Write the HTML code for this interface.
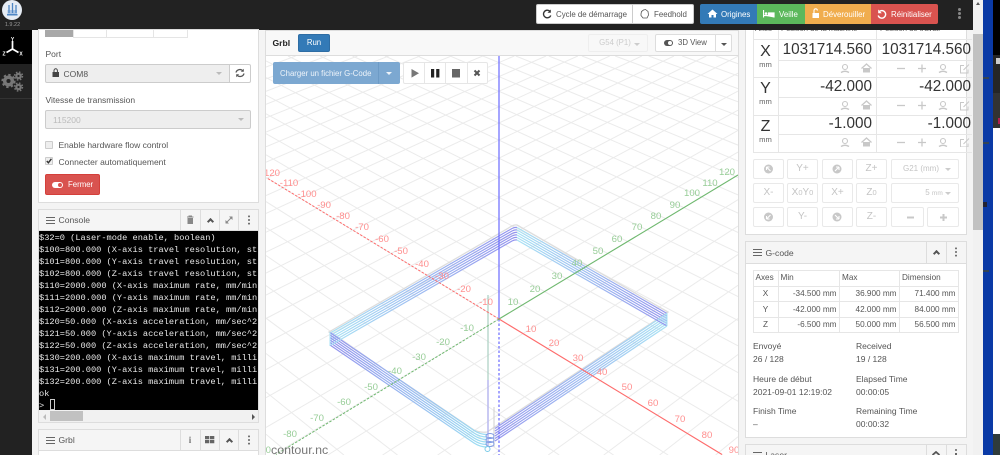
<!DOCTYPE html>
<html><head><meta charset="utf-8"><style>
html,body{margin:0;padding:0;width:1000px;height:455px;overflow:hidden;background:#f4f4f4}
body{font-family:"Liberation Sans",sans-serif;font-size:8.5px;color:#555;position:relative}
#w{position:absolute;left:0;top:0;width:1000px;height:455px;overflow:hidden;filter:blur(.35px)}
.a{position:absolute;box-sizing:border-box;white-space:nowrap}
.t{position:absolute;white-space:nowrap;line-height:12px;margin-top:-6px}
.c{text-align:center}
.r{text-align:right}
.b{position:absolute;box-sizing:border-box;border:1px solid #e9e9e9;border-radius:2px;background:#fff;color:#c4c4c4;text-align:center}
.hd{position:absolute;box-sizing:border-box;background:#f5f5f5;border-bottom:1px solid #ddd}
.div{position:absolute;width:1px;background:#ddd}
.dots{position:absolute;width:2.4px;height:2.4px;border-radius:50%;background:currentColor;box-shadow:0 3.6px 0 currentColor,0 -3.6px 0 currentColor}
.bar{position:absolute;width:9px;height:7px;border-top:1.2px solid #666;border-bottom:1.2px solid #666;box-sizing:border-box}
.bar:after{content:"";position:absolute;left:0;right:0;top:1.7px;height:1.2px;background:#666}
.chev{position:absolute;width:5px;height:5px;border-left:2px solid #555;border-top:2px solid #555;transform:rotate(45deg);box-sizing:border-box}
.car{position:absolute;width:0;height:0;border-left:3px solid transparent;border-right:3px solid transparent;border-top:3px solid #bbb}
.hl{position:absolute;height:1px;background:#e6e6e6}
.vl{position:absolute;width:1px;background:#e6e6e6}
.val{position:absolute;font-size:15.3px;line-height:18px;color:#333;text-align:right;white-space:nowrap}
.ax{position:absolute;left:753px;width:25px;text-align:center;font-size:16px;color:#333;line-height:18px}
.mm{position:absolute;left:753px;width:25px;text-align:center;font-size:7.6px;color:#666;line-height:10px}
.m{position:absolute;left:39px;font:8.67px/12px "Liberation Mono",monospace;color:#e8e8e8;white-space:pre;width:219px;overflow:hidden}
</style></head><body><div id="w">

<!-- backgrounds -->
<div class="a" style="left:0;top:0;width:1000px;height:30px;background:#222"></div>
<div class="a" style="left:0;top:0;width:32px;height:455px;background:#222"></div>
<div class="a" style="left:0;top:30px;width:32px;height:34px;background:#000"></div>
<div class="a" style="left:0;top:98px;width:32px;height:1px;background:#333"></div>

<!-- logo -->
<div class="a" style="left:2px;top:0;width:20px;height:20px;border-radius:50%;background:#e6ecf4"></div>
<svg class="a" style="left:2px;top:0" width="20" height="20"><rect x="5.500" y="10" width="9.500" height="5" fill="#a9c4e4"/><path d="M7 5v8M10.500 3v10M14 5v8" stroke="#4f86c4" stroke-width="1.300"/><rect x="5" y="14" width="10.500" height="1.500" fill="#4f86c4"/></svg>
<div class="t c" style="left:0;top:25px;width:25px;font-size:5.5px;color:#999">1.9.22</div>
<!-- axes icon -->
<svg class="a" style="left:0;top:30px" width="32" height="34"><path d="M12.500 11V19M12.500 19L6.500 22.500M12.500 19L18.500 22.500" stroke="#fff" stroke-width="1.700" fill="none"/><text x="12.500" y="11" font-size="5" font-weight="bold" fill="#fff" text-anchor="middle" font-family="Liberation Sans">Y</text><text x="4" y="25.500" font-size="5" font-weight="bold" fill="#fff" text-anchor="middle" font-family="Liberation Sans">Z</text><text x="21" y="25.500" font-size="5" font-weight="bold" fill="#fff" text-anchor="middle" font-family="Liberation Sans">X</text></svg>
<!-- gears -->
<svg class="a" style="left:0;top:66px" width="32" height="30"><g fill="none" stroke="#777"><circle cx="8.500" cy="15" r="3.800" stroke-width="3.500"/><circle cx="8.500" cy="15" r="6.200" stroke-width="1.800" stroke-dasharray="2.400 2.400"/><circle cx="18.500" cy="10" r="2.200" stroke-width="2.200"/><circle cx="18.500" cy="10" r="4" stroke-width="1.400" stroke-dasharray="1.600 1.600"/><circle cx="18.500" cy="21" r="2.200" stroke-width="2.200"/><circle cx="18.500" cy="21" r="4" stroke-width="1.400" stroke-dasharray="1.600 1.600"/></g></svg>

<!-- left panel -->
<div class="a" style="left:38px;top:29px;width:221px;height:174px;background:#fff;border:1px solid #ddd"></div>
<div class="a" style="left:45px;top:30px;width:28px;height:7px;background:#a8a8a8"></div>
<div class="a" style="left:73px;top:30px;width:34px;height:8px;border:1px solid #e5e5e5;border-top:0"></div>
<div class="a" style="left:107px;top:30px;width:47px;height:8px;border:1px solid #e5e5e5;border-top:0;border-left:0"></div>
<div class="a" style="left:154px;top:30px;width:34px;height:8px;border:1px solid #e5e5e5;border-top:0;border-left:0"></div>
<div class="t" style="left:45.500px;top:54px">Port</div>
<div class="a" style="left:45px;top:64px;width:185px;height:19px;background:#eee;border:1px solid #ccc;border-radius:2px 0 0 2px"></div>
<div class="a" style="left:229px;top:64px;width:22px;height:19px;background:#fff;border:1px solid #ccc;border-radius:0 2px 2px 0"></div>
<svg class="a" style="left:51px;top:68px" width="10" height="10"><rect x="1.500" y="4" width="6.500" height="5" fill="#444"/><path d="M3 4V2.500a1.700 1.700 0 0 1 3.400 0V4" fill="none" stroke="#444"/></svg>
<div class="t" style="left:63.500px;top:73.500px">COM8</div>
<div class="car" style="left:216px;top:72px"></div>
<svg class="a" style="left:235px;top:68px" width="10" height="10"><path d="M1 4.500a4 4 0 0 1 7-1.500M9 5.500a4 4 0 0 1-7 1.500" fill="none" stroke="#555" stroke-width="1.300"/><path d="M8.800 .8v3h-3zM1.200 9.200v-3h3z" fill="#555"/></svg>
<div class="t" style="left:45.500px;top:99.500px">Vitesse de transmission</div>
<div class="a" style="left:45px;top:110px;width:206px;height:19px;background:#eee;border:1px solid #ccc;border-radius:2px"></div>
<div class="t" style="left:53px;top:119.500px;color:#bbb">115200</div>
<div class="car" style="left:238px;top:118px"></div>
<div class="a" style="left:45px;top:141px;width:8px;height:8px;background:#eee;border:1px solid #ccc;border-radius:1px"></div>
<div class="t" style="left:58.500px;top:145px">Enable hardware flow control</div>
<div class="a" style="left:45px;top:157px;width:8px;height:8px;background:#eee;border:1px solid #ccc;border-radius:1px"></div>
<svg class="a" style="left:45px;top:157px" width="8" height="8"><path d="M1.800 4L3.400 5.800L6.400 1.800" fill="none" stroke="#333" stroke-width="1.400"/></svg>
<div class="t" style="left:58.500px;top:161.500px">Connecter automatiquement</div>
<div class="a" style="left:45px;top:174px;width:55px;height:21px;background:#d9534f;border:1px solid #d43f3a;border-radius:2px"></div>
<div class="a" style="left:52px;top:181.500px;width:11px;height:6.500px;border-radius:4px;background:#fff"></div>
<div class="a" style="left:57.500px;top:182.500px;width:4.500px;height:4.500px;border-radius:50%;background:#d9534f"></div>
<div class="t" style="left:68px;top:185px;color:#fff;font-size:7.8px">Fermer</div>

<!-- console panel -->
<div class="a" style="left:38px;top:209px;width:221px;height:214px;background:#fff;border:1px solid #ddd"></div>
<div class="hd" style="left:39px;top:210px;width:219px;height:21px"></div>
<div class="bar" style="left:45.500px;top:217px"></div>
<div class="t" style="left:58.500px;top:220px;font-size:8.600px">Console</div>
<div class="div" style="left:180px;top:210px;height:21px"></div><div class="div" style="left:200px;top:210px;height:21px"></div><div class="div" style="left:219px;top:210px;height:21px"></div><div class="div" style="left:238px;top:210px;height:21px"></div>
<svg class="a" style="left:186px;top:215px" width="9" height="10"><path d="M1 2h6.500M3 2V1h2.500v1" stroke="#888" fill="none"/><rect x="1.500" y="3" width="5.500" height="6" fill="#888"/></svg>
<div class="chev" style="left:207.500px;top:218.500px"></div>
<svg class="a" style="left:224px;top:215px" width="10" height="10"><path d="M2 8L8 2" stroke="#888"/><path d="M5 1.500h3.500V5zM1.500 5v3.500H5z" fill="#888"/></svg>
<div class="dots" style="left:247.500px;top:218.500px;color:#666"></div>
<div class="a" style="left:39px;top:231px;width:219px;height:179px;background:#000"></div>
<div class="m" style="top:232px">$32=0 (Laser-mode enable, boolean)
$100=800.000 (X-axis travel resolution, st
$101=800.000 (Y-axis travel resolution, st
$102=800.000 (Z-axis travel resolution, st
$110=2000.000 (X-axis maximum rate, mm/min
$111=2000.000 (Y-axis maximum rate, mm/min
$112=2000.000 (Z-axis maximum rate, mm/min
$120=50.000 (X-axis acceleration, mm/sec^2
$121=50.000 (Y-axis acceleration, mm/sec^2
$122=50.000 (Z-axis acceleration, mm/sec^2
$130=200.000 (X-axis maximum travel, milli
$131=200.000 (Y-axis maximum travel, milli
$132=200.000 (Z-axis maximum travel, milli
ok
&gt;</div>
<div class="a" style="left:49.500px;top:399px;width:5.500px;height:11px;border:1px solid #ccc"></div>
<div class="a" style="left:39px;top:410px;width:219px;height:12px;background:#f1f1f1"></div>
<div class="a" style="left:50px;top:411px;width:33px;height:10px;background:#c1c1c1"></div>
<div class="a" style="left:43px;top:414px;width:0;height:0;border:3px solid transparent;border-left:0;border-right:3px solid #bbb"></div>
<div class="a" style="left:252px;top:414px;width:0;height:0;border:3px solid transparent;border-right:0;border-left:3px solid #555"></div>

<!-- Grbl panel -->
<div class="a" style="left:38px;top:429px;width:221px;height:26px;background:#fff;border:1px solid #ddd;border-bottom:0"></div>
<div class="hd" style="left:39px;top:430px;width:219px;height:21px"></div>
<div class="bar" style="left:45.500px;top:437px"></div>
<div class="t" style="left:58.500px;top:440px;font-size:8.600px">Grbl</div>
<div class="div" style="left:180px;top:430px;height:21px"></div><div class="div" style="left:200px;top:430px;height:21px"></div><div class="div" style="left:219px;top:430px;height:21px"></div><div class="div" style="left:238px;top:430px;height:21px"></div>
<div class="t c" style="left:180px;top:439.500px;width:20px;font:bold 9px/12px 'Liberation Serif',serif;color:#777">i</div>
<svg class="a" style="left:205px;top:436px" width="10" height="8"><path d="M0 0h4.300v3.300H0zM5 0h4.300v3.300H5zM0 4h4.300v3.300H0zM5 4h4.300v3.300H5z" fill="#666"/></svg>
<div class="chev" style="left:227px;top:438.500px"></div>
<div class="dots" style="left:247.500px;top:438.500px;color:#666"></div>

<!-- center widget -->
<div class="a" style="left:265px;top:30px;width:474px;height:425px;background:#fff;border:1px solid #ddd;border-bottom:0"></div>
<div class="a" style="left:266px;top:31px;width:472px;height:25px;background:#f8f8f8;border-bottom:1px solid #ddd"></div>
<svg id="g" class="a" style="left:266px;top:56px" width="472" height="399" viewBox="266 56 472 399" font-family="Liberation Sans" font-size="9.600" text-anchor="middle">
<defs>
<linearGradient id="g1" gradientUnits="userSpaceOnUse" x1="516" y1="240" x2="667" y2="325"><stop offset="0" stop-color="#a8e2f4"/><stop offset="1" stop-color="#9494ee"/></linearGradient>
<linearGradient id="g2" gradientUnits="userSpaceOnUse" x1="667" y1="325" x2="490" y2="445"><stop offset="0" stop-color="#a8e2f4"/><stop offset="1" stop-color="#9494ee"/></linearGradient>
<linearGradient id="g3" gradientUnits="userSpaceOnUse" x1="480" y1="447" x2="330" y2="347"><stop offset="0" stop-color="#9cdcf2"/><stop offset="1" stop-color="#9494ee"/></linearGradient>
<linearGradient id="g4" gradientUnits="userSpaceOnUse" x1="330" y1="345" x2="513" y2="240"><stop offset="0" stop-color="#a8e2f4"/><stop offset="1" stop-color="#9494ee"/></linearGradient>
<g id="lay" fill="none" stroke-width="1.200">
<path d="M517 240Q515 239.500 512 241L331 345" stroke="url(#g4)"/>
<path d="M517 240L667 326" stroke="url(#g1)"/>
<path d="M667 326L495 441" stroke="url(#g2)"/>
<path d="M330 345L474 443Q480 447 487 447" stroke="url(#g3)"/>
</g>
</defs>
<g id="grid" stroke="#ebebeb" stroke-width="1" fill="none"></g>
<g stroke="#ddd" fill="none" stroke-width="1.300"><path d="M517 225Q515 224.500 512 226L329 332L474 430Q480 433 487 432L668 312L517 225"/></g>
<use href="#lay" y="-2.500"/><use href="#lay" y="-5"/><use href="#lay" y="-7.500"/><use href="#lay" y="-10"/><use href="#lay" y="-12.500"/><use href="#lay"/>
<path d="M330 332V346M667 313V326" stroke="#a8e2f4" fill="none"/>
<path d="M488 295V380" stroke="#a9cfc0" stroke-width="1.200"/>
<path d="M488 380V447" stroke="#b4b4ee" stroke-width="1.400"/>
<path d="M494 407V447" stroke="#cfcfcf" stroke-width="1"/>
<g fill="none" stroke="#7f9be4"><ellipse cx="490" cy="436" rx="4" ry="2.500"/><ellipse cx="490" cy="440" rx="4" ry="2.500"/><ellipse cx="490" cy="444" rx="4" ry="2.500"/><ellipse cx="487.500" cy="449" rx="2.500" ry="2.500" stroke="#7ccbe8"/></g>
<!-- axes -->
<path d="M499 56V319" stroke="#6a6aff" stroke-width="1.200"/>
<path d="M499 319V455" stroke="#6a6aff" stroke-width="1.200" stroke-dasharray="2.500 2"/>
<path d="M499 319L722 454.500" stroke="#ff6b6b" stroke-width="1.100"/>
<path d="M499 319L267 178" stroke="#ff6b6b" stroke-width="1" stroke-dasharray="2.500 1.500"/>
<path d="M499 319L738 175" stroke="#6fb96f" stroke-width="1.100"/>
<path d="M499 319L276 454.500" stroke="#6fb96f" stroke-width="1" stroke-dasharray="2.500 1.500"/>
<g fill="#ff8f8f">
<text x="531" y="332">10</text><text x="554" y="346">20</text><text x="578" y="361">30</text><text x="602" y="375">40</text><text x="627" y="390">50</text><text x="653" y="406">60</text><text x="680" y="422">70</text><text x="707" y="438">80</text><text x="734" y="453">90</text>
<text x="486" y="305">-10</text><text x="464" y="292">-20</text><text x="442" y="279">-30</text><text x="422" y="267">-40</text><text x="401" y="254">-50</text><text x="382" y="242">-60</text><text x="362" y="230">-70</text><text x="343" y="219">-80</text><text x="324" y="208">-90</text><text x="307" y="197">-100</text><text x="289" y="186">-110</text><text x="272" y="176">120</text>
</g>
<g fill="#97cd97">
<text x="513" y="305">10</text><text x="535" y="292">20</text><text x="557" y="279">30</text><text x="577" y="266">40</text><text x="598" y="254">50</text><text x="617" y="242">60</text><text x="637" y="230">70</text><text x="656" y="219">80</text><text x="675" y="208">90</text><text x="692" y="196">100</text><text x="710" y="186">110</text><text x="727" y="175">120</text>
<text x="467" y="331">-10</text><text x="443" y="345">-20</text><text x="419" y="360">-30</text><text x="395" y="374">-40</text><text x="371" y="390">-50</text><text x="344" y="405">-60</text><text x="317" y="421">-70</text><text x="290" y="437">-80</text><text x="264" y="453">-90</text>
</g>
</svg>
<div class="a" style="left:271px;top:445px;height:10px;line-height:10px;font-size:12.400px;color:#777;overflow:hidden">contour.nc</div>

<!-- center header -->
<div class="t" style="left:272.500px;top:43px;font-weight:bold;font-size:8.600px;color:#222">Grbl</div>
<div class="a c" style="left:298px;top:34px;width:32px;height:18px;background:#337ab7;border:1px solid #2e6da4;border-radius:2px;color:#fff;font-size:7.800px;line-height:16px">Run</div>
<div class="a c" style="left:588px;top:34px;width:60px;height:18px;border:1px solid #eee;border-radius:2px;color:#ccc;font-size:7.800px;line-height:16px;padding-right:6px">G54 (P1)</div>
<div class="car" style="left:634px;top:42.500px;border-top-color:#ccc"></div>
<div class="a" style="left:655px;top:34px;width:61px;height:18px;background:#fff;border:1px solid #ddd;border-radius:2px 0 0 2px"></div>
<div class="a" style="left:715px;top:34px;width:17px;height:18px;background:#fff;border:1px solid #ddd;border-radius:0 2px 2px 0"></div>
<div class="a" style="left:664px;top:40px;width:9px;height:6px;border-radius:3px;background:#555"></div>
<div class="a" style="left:668px;top:41px;width:4px;height:4px;border-radius:50%;background:#fff"></div>
<div class="t" style="left:678px;top:43px;font-size:7.800px">3D View</div>
<div class="car" style="left:720.500px;top:42.500px;border-top-color:#555"></div>

<!-- g-code toolbar -->
<div class="a" style="left:273px;top:62px;width:127px;height:22px;background:#7ca8d1;border-radius:2px"></div>
<div class="a" style="left:378px;top:62px;width:1px;height:22px;background:#6d9bc6"></div>
<div class="t" style="left:280px;top:73.500px;color:#eef4fa;font-size:7.800px">Charger un fichier G-Code</div>
<div class="car" style="left:386px;top:71.500px;border-top-color:#eef4fa"></div>
<div class="a" style="left:403px;top:62px;width:85px;height:22px;background:#fff;border:1px solid #e6e6e6;border-radius:2px"></div>
<div class="a" style="left:424px;top:62px;width:1px;height:22px;background:#e6e6e6"></div><div class="a" style="left:445px;top:62px;width:1px;height:22px;background:#e6e6e6"></div><div class="a" style="left:467px;top:62px;width:1px;height:22px;background:#e6e6e6"></div>
<svg class="a" style="left:403px;top:62px" width="85" height="22"><path d="M8.500 7L16 11.300L8.500 15.600z" fill="#777"/><path d="M28 7h3.200v8.500H28zM33.200 7h3.200v8.500H33.200z" fill="#222"/><rect x="49" y="7" width="8" height="8.500" fill="#666"/><path d="M71.500 8.500L76.500 13.500M76.500 8.500L71.500 13.500" stroke="#555" stroke-width="2"/></svg>

<!-- top bar buttons -->
<div class="a" style="left:536px;top:4px;width:157.500px;height:19.500px;background:#fff;border:1px solid #ccc;border-radius:2px"></div>
<div class="a" style="left:632px;top:4px;width:1px;height:19.500px;background:#ccc"></div>
<svg class="a" style="left:542px;top:9px" width="10" height="10"><path d="M8 2.300A3.800 3.800 0 1 0 8.800 6.500" fill="none" stroke="#333" stroke-width="1.400"/><path d="M8.800 .5V3.800H5.500z" fill="#333"/></svg>
<div class="t" style="left:556px;top:14.500px;font-size:7.900px">Cycle de démarrage</div>
<svg class="a" style="left:639px;top:8px" width="11" height="12"><path d="M2 6L2.500 3.500L4.500 2L6.500 1.500L9 3.500L9.500 7L8 10H4L2 7.500z" fill="none" stroke="#555" stroke-width=".800"/></svg>
<div class="t" style="left:654px;top:14.500px;font-size:7.900px">Feedhold</div>
<div class="a" style="left:700px;top:4px;width:57px;height:19.500px;background:#337ab7;border-radius:2px 0 0 2px"></div>
<div class="a" style="left:757px;top:4px;width:48px;height:19.500px;background:#5cb85c"></div>
<div class="a" style="left:805px;top:4px;width:66px;height:19.500px;background:#f0ad4e"></div>
<div class="a" style="left:871px;top:4px;width:67px;height:19.500px;background:#d9534f;border-radius:0 2px 2px 0"></div>
<svg class="a" style="left:707px;top:9px" width="11" height="9"><path d="M5.500 .5L10.500 5H9V8.500H6.500V6H4.500V8.500H2V5H.5z" fill="#fff"/></svg>
<div class="t" style="left:721px;top:14.500px;font-size:7.900px;color:#fff">Origines</div>
<svg class="a" style="left:763px;top:10px" width="12" height="8"><path d="M.5 0V7.500M.5 5.500H11V7.500M11 5.500V3H5.500V5.500" stroke="#fff" fill="#fff" stroke-width="1.200"/><circle cx="3" cy="3.500" r="1.300" fill="#fff"/></svg>
<div class="t" style="left:779px;top:14.500px;font-size:7.900px;color:#fff">Veille</div>
<svg class="a" style="left:811px;top:8px" width="10" height="11"><rect x="1.500" y="5" width="6.500" height="5" fill="#fff"/><path d="M3 5V2.500a1.700 1.700 0 0 1 3.400 0" fill="none" stroke="#fff" stroke-width="1.100"/></svg>
<div class="t" style="left:823px;top:14.500px;font-size:7.900px;color:#fff">Déverouiller</div>
<svg class="a" style="left:877px;top:9px" width="10" height="10"><path d="M2 2.800A3.800 3.800 0 1 1 1.200 6.500" fill="none" stroke="#fff" stroke-width="1.400"/><path d="M1.200 .5V4.200H4.800z" fill="#fff"/></svg>
<div class="t" style="left:891px;top:14.500px;font-size:7.900px;color:#fff">Réinitialiser</div>
<div class="dots" style="left:957.500px;top:11.500px;color:#888;width:3px;height:3px;box-shadow:0 4px 0 #888,0 -4px 0 #888"></div>

<!-- right column: DRO panel -->
<div class="a" style="left:745px;top:30px;width:222px;height:205px;background:#fff;border:1px solid #ddd;border-top:0"></div>
<div class="a" style="left:745px;top:30px;width:228px;height:9px;overflow:hidden">
<div class="t" style="left:10px;top:-1px;font-size:7.600px;color:#666">Axes</div>
<div class="t" style="left:36px;top:-1px;font-size:7.600px;color:#666">Position de la machine</div>
<div class="t" style="left:135px;top:-1px;font-size:7.600px;color:#666">Position de travail</div>
</div>
<div class="hl" style="left:753px;top:39px;width:219px"></div>
<div class="hl" style="left:778px;top:60px;width:194px"></div>
<div class="hl" style="left:753px;top:77px;width:219px"></div>
<div class="hl" style="left:778px;top:97px;width:194px"></div>
<div class="hl" style="left:753px;top:115px;width:219px"></div>
<div class="hl" style="left:778px;top:134px;width:194px"></div>
<div class="hl" style="left:753px;top:152px;width:219px"></div>
<div class="vl" style="left:753px;top:30px;height:122px"></div>
<div class="vl" style="left:778px;top:30px;height:122px"></div>
<div class="vl" style="left:876px;top:30px;height:122px"></div>

<div class="ax" style="top:43px">X</div><div class="mm" style="top:60px">mm</div>
<div class="ax" style="top:80px">Y</div><div class="mm" style="top:97px">mm</div>
<div class="ax" style="top:118px">Z</div><div class="mm" style="top:135px">mm</div>
<div class="val" style="left:772px;width:100px;top:41px">1031714.560</div>
<div class="val" style="left:870px;width:101px;top:41px">1031714.560</div>
<div class="val" style="left:772px;width:100px;top:78px">-42.000</div>
<div class="val" style="left:870px;width:101px;top:78px">-42.000</div>
<div class="val" style="left:772px;width:100px;top:115px">-1.000</div>
<div class="val" style="left:870px;width:101px;top:115px">-1.000</div>

<svg class="a" style="left:835px;top:62px" width="135" height="85" fill="none" stroke="#c8c8c8">
<defs><g id="ro"><circle cx="10" cy="5" r="2.500" stroke-width="1.100"/><path d="M6 10.500Q10 8 14 10.500" stroke-width="1.500"/><path d="M28 6h7v4.500h-7z" fill="#c8c8c8" stroke="none"/><path d="M26.500 6.500L31.500 2L36.500 6.500" stroke-width="1.300"/><path d="M62 6.500h8" stroke-width="1.300"/><path d="M83 6.500h8M87 2.500v8" stroke-width="1.300"/><circle cx="108" cy="5" r="2.500" stroke-width="1.100"/><path d="M104 10.500Q108 8 112 10.500" stroke-width="1.500"/><path d="M129 3.500h-3.500v7.500h7.500v-3.500M128.500 8L134 2.500" stroke-width="1"/></g></defs>
<use href="#ro"/><use href="#ro" y="37"/><use href="#ro" y="74"/>
</svg>

<!-- jog -->
<div class="b" style="left:753px;top:159px;width:31px;height:20px"></div>
<div class="b" style="left:787px;top:159px;width:31px;height:20px;font-size:10px;line-height:18px">Y+</div>
<div class="b" style="left:822px;top:159px;width:31px;height:20px"></div>
<div class="b" style="left:856px;top:159px;width:31px;height:20px;font-size:10px;line-height:18px">Z+</div>
<div class="b" style="left:891px;top:159px;width:68px;height:20px;font-size:8px;line-height:18px;padding-right:8px">G21 (mm)</div>
<div class="b" style="left:753px;top:183px;width:31px;height:20px;font-size:10px;line-height:18px">X-</div>
<div class="b" style="left:787px;top:183px;width:31px;height:20px;font-size:10px;line-height:18px">X<span style="font-size:7.500px">0</span>Y<span style="font-size:7.500px">0</span></div>
<div class="b" style="left:822px;top:183px;width:31px;height:20px;font-size:10px;line-height:18px">X+</div>
<div class="b" style="left:856px;top:183px;width:31px;height:20px;font-size:10px;line-height:18px">Z<span style="font-size:7.500px">0</span></div>
<div class="b" style="left:891px;top:183px;width:68px;height:20px;font-size:8px;line-height:18px;padding-left:18px">5 <span style="font-size:6.500px">mm</span></div>
<div class="b" style="left:753px;top:207px;width:31px;height:20px"></div>
<div class="b" style="left:787px;top:207px;width:31px;height:20px;font-size:10px;line-height:18px">Y-</div>
<div class="b" style="left:822px;top:207px;width:31px;height:20px"></div>
<div class="b" style="left:856px;top:207px;width:31px;height:20px;font-size:10px;line-height:18px">Z-</div>
<div class="b" style="left:891px;top:207px;width:33px;height:20px"></div>
<div class="b" style="left:927px;top:207px;width:32px;height:20px"></div>
<div class="car" style="left:945px;top:168px;border-top-color:#ccc"></div>
<div class="car" style="left:945px;top:192px;border-top-color:#ccc"></div>
<svg class="a" style="left:753px;top:159px" width="206" height="68"><g fill="#c8c8c8"><circle cx="15.500" cy="10" r="4.500"/><circle cx="84" cy="10" r="4.500"/><circle cx="15.500" cy="58" r="4.500"/><circle cx="84" cy="58" r="4.500"/></g><g stroke="#fff" stroke-width="1.100" fill="none"><path d="M13.500 8L17.500 12M13.500 8h3M13.500 8v3M86 8L82 12M86 8h-3M86 8v3M13.500 60L17.500 56M13.500 60h3M13.500 60v-3M86 60L82 56M86 60h-3M86 60v-3"/></g><path d="M154 58.500h7" stroke="#c8c8c8" stroke-width="2"/><path d="M187 58.500h7M190.500 55v7" stroke="#c8c8c8" stroke-width="2"/></svg>

<!-- G-code panel -->
<div class="a" style="left:745px;top:241px;width:222px;height:197px;background:#fff;border:1px solid #ddd"></div>
<div class="hd" style="left:746px;top:242px;width:220px;height:22px"></div>
<div class="bar" style="left:752.500px;top:249px"></div>
<div class="t" style="left:765.500px;top:252.500px;font-size:8.600px">G-code</div>
<div class="div" style="left:926px;top:242px;height:22px"></div><div class="div" style="left:946px;top:242px;height:22px"></div>
<div class="chev" style="left:933.500px;top:251px"></div>
<div class="dots" style="left:955px;top:251px;color:#666"></div>

<div class="a" style="left:753px;top:270px;width:206px;height:63px;border:1px solid #e6e6e6"></div>
<div class="hl" style="left:753px;top:286px;width:206px"></div><div class="hl" style="left:753px;top:301px;width:206px"></div><div class="hl" style="left:753px;top:317px;width:206px"></div>
<div class="vl" style="left:778px;top:270px;height:63px"></div><div class="vl" style="left:839px;top:270px;height:63px"></div><div class="vl" style="left:899px;top:270px;height:63px"></div>
<div class="t" style="left:755.500px;top:278px;font-size:8.200px">Axes</div><div class="t" style="left:780.500px;top:278px;font-size:8.200px">Min</div><div class="t" style="left:842px;top:278px;font-size:8.200px">Max</div><div class="t" style="left:902px;top:278px;font-size:8.200px">Dimension</div>
<div class="t c" style="left:753px;width:25px;top:294px;font-size:8.200px">X</div><div class="t c" style="left:753px;width:25px;top:309.500px;font-size:8.200px">Y</div><div class="t c" style="left:753px;width:25px;top:325px;font-size:8.200px">Z</div>
<div class="t r" style="left:778px;width:58.500px;top:294px;font-size:8.200px">-34.500 mm</div><div class="t r" style="left:839px;width:57.500px;top:294px;font-size:8.200px">36.900 mm</div><div class="t r" style="left:899px;width:56.500px;top:294px;font-size:8.200px">71.400 mm</div>
<div class="t r" style="left:778px;width:58.500px;top:309.500px;font-size:8.200px">-42.000 mm</div><div class="t r" style="left:839px;width:57.500px;top:309.500px;font-size:8.200px">42.000 mm</div><div class="t r" style="left:899px;width:56.500px;top:309.500px;font-size:8.200px">84.000 mm</div>
<div class="t r" style="left:778px;width:58.500px;top:325px;font-size:8.200px">-6.500 mm</div><div class="t r" style="left:839px;width:57.500px;top:325px;font-size:8.200px">50.000 mm</div><div class="t r" style="left:899px;width:56.500px;top:325px;font-size:8.200px">56.500 mm</div>

<div class="t" style="left:753px;top:346px">Envoyé</div><div class="t" style="left:856px;top:346px">Received</div>
<div class="t" style="left:753px;top:359px">26 / 128</div><div class="t" style="left:856px;top:359px">19 / 128</div>
<div class="t" style="left:753px;top:379px">Heure de début</div><div class="t" style="left:856px;top:379px">Elapsed Time</div>
<div class="t" style="left:753px;top:392px">2021-09-01 12:19:02</div><div class="t" style="left:856px;top:392px">00:00:05</div>
<div class="t" style="left:753px;top:411px">Finish Time</div><div class="t" style="left:856px;top:411px">Remaining Time</div>
<div class="t" style="left:753px;top:424px">–</div><div class="t" style="left:856px;top:424px">00:00:32</div>

<!-- Laser panel -->
<div class="a" style="left:745px;top:444px;width:222px;height:11px;background:#f5f5f5;border:1px solid #ddd;border-bottom:0;overflow:hidden">
<div class="a" style="left:6.500px;top:7px;width:9px;height:3px;border-top:1.200px solid #666"></div>
<div class="a" style="left:19.500px;top:4px;height:6px;line-height:12px;font-size:8.600px;overflow:hidden">Laser</div>
<div class="div" style="left:180px;top:0;height:10px"></div><div class="div" style="left:200px;top:0;height:10px"></div>
<svg class="a" style="left:185px;top:6px" width="10" height="4"><path d="M1.500 4L5 1L8.500 4" fill="none" stroke="#555" stroke-width="1.800"/></svg>
<div class="a" style="left:209px;top:4px;width:2.400px;height:2.400px;border-radius:50%;background:#666"></div>
<div class="a" style="left:209px;top:8px;width:2.400px;height:2px;background:#666"></div>
</div>

<!-- right scrollbar & desktop -->
<div class="a" style="left:973px;top:0;width:10px;height:455px;background:#f1f1f1"></div>
<div class="a" style="left:973px;top:34px;width:10px;height:196px;background:#c1c1c1"></div>
<div class="a" style="left:975.500px;top:2px;width:0;height:0;border:2.500px solid transparent;border-top:0;border-bottom:3px solid #555"></div>
<div class="a" style="left:983px;top:0;width:10px;height:455px;background:#0a3aa6"></div>
<div class="a" style="left:993px;top:0;width:7px;height:55px;background:#000"></div>
<div class="a" style="left:993px;top:55px;width:7px;height:38px;background:#262626"></div>
<div class="a" style="left:993px;top:93px;width:7px;height:35px;background:#333"></div>
<div class="a" style="left:998px;top:118px;width:2px;height:6px;background:#b02050"></div>
<div class="a" style="left:993px;top:128px;width:7px;height:306px;background:#fff"></div>
<div class="a" style="left:993px;top:434px;width:7px;height:21px;background:#2f3b3b"></div>
<div class="a" style="left:996px;top:58px;width:4px;height:6px;background:#ccc"></div>
<div class="a" style="left:983px;top:77px;width:6px;height:1.500px;background:#345"></div>
<div class="a" style="left:983px;top:142px;width:6px;height:1.500px;background:#345"></div>
<div class="a" style="left:983px;top:202px;width:4px;height:5px;background:#223"></div>
<div class="a" style="left:983px;top:270px;width:6px;height:1.500px;background:#345"></div>
</div>
<script>
(function(){
function X(k){var d=23.5*k/(1-.018*k);return [499+d,319+.608*d]}
function Y(k){var d=23.5*k/(1+.016*k);return [499+d,319-.6025*d]}
var Vx=[-806,-474],Vy=[1968,-566];
var xmin=266,xmax=738,ymin=56,ymax=455;
function clip(p,v){
  var x0=v[0],y0=v[1],dx=(p[0]-v[0])*4,dy=(p[1]-v[1])*4,t0=0,t1=1;
  var P=[-dx,dx,-dy,dy],Q=[x0-xmin,xmax-x0,y0-ymin,ymax-y0];
  for(var i=0;i<4;i++){
    if(P[i]===0){if(Q[i]<0)return '';continue}
    var r=Q[i]/P[i];
    if(P[i]<0){if(r>t0)t0=r}else{if(r<t1)t1=r}
  }
  if(t0>=t1)return '';
  return 'M'+(x0+dx*t0).toFixed(1)+' '+(y0+dy*t0).toFixed(1)+'L'+(x0+dx*t1).toFixed(1)+' '+(y0+dy*t1).toFixed(1);
}
var d='';
for(var k=-40;k<=30;k++){ if(1+.016*k>0.05) d+=clip(Y(k),Vx);}
for(var k=-30;k<=40;k++){ if(1-.018*k>0.05) d+=clip(X(k),Vy);}
document.getElementById('grid').innerHTML='<path d="'+d+'"/>';
})();
</script>
</body></html>
